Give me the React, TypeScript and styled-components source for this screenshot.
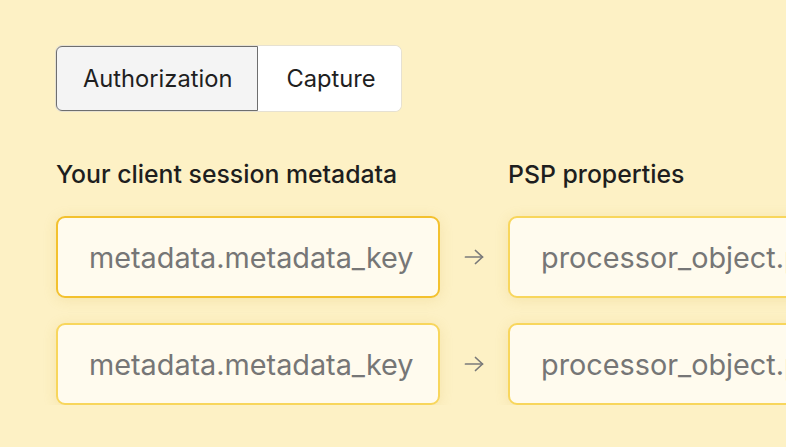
import styled, { createGlobalStyle } from 'styled-components';
import { useState } from 'react';

const GlobalStyle = createGlobalStyle`
    html, body {
        margin: 0;
        padding: 0;
        background: #fdf1c5;
        overflow: hidden;
    }
    body {
        font-family: Inter, "Noto Sans", sans-serif;
        -webkit-font-smoothing: antialiased;
    }
`;

const rows = [
    { source: 'metadata.metadata_key', target: 'processor_object.property', focused: true },
    { source: 'metadata.metadata_key', target: 'processor_object.property', focused: false },
];

const App: React.FC = () => {
    const [tab, setTab] = useState<string>('Authorization');

    return (
        <>
            <GlobalStyle />
            <StyledPage>
                <StyledTabs>
                    {['Authorization', 'Capture'].map((item) => (
                        <StyledTab key={item} $active={tab === item} onClick={() => setTab(item)}>
                            {item}
                        </StyledTab>
                    ))}
                </StyledTabs>
                <StyledGrid>
                    <StyledLabel>Your client session metadata</StyledLabel>
                    <span />
                    <StyledLabel>PSP properties</StyledLabel>
                    {rows.map((row, index) => (
                        <StyledRowFragment key={index}>
                            <StyledField $focused={row.focused}>{row.source}</StyledField>
                            <StyledArrow>
                                <svg width="20" height="16" viewBox="0 0 20 16" fill="none" stroke="currentColor" strokeWidth="1.7" strokeLinecap="round" strokeLinejoin="round">
                                    <path d="M1.5 8h17" />
                                    <path d="M11.5 1.5L18.5 8l-7 6.5" />
                                </svg>
                            </StyledArrow>
                            <StyledField $focused={false}>{row.target}</StyledField>
                        </StyledRowFragment>
                    ))}
                </StyledGrid>
            </StyledPage>
        </>
    );
};

const StyledPage = styled.div`
    padding: 46px 0 0 56px;
    width: 900px;
`;

const StyledTabs = styled.div`
    display: inline-flex;
    background: #ffffff;
    border-radius: 6px;
    box-shadow: 0 0 0 1px #e6e1d2;
`;

const StyledTab = styled.div<{ $active: boolean }>`
    height: 65px;
    box-sizing: border-box;
    display: flex;
    align-items: center;
    padding: 0 ${(p) => (p.$active ? '25px' : '25px')} 0 ${(p) => (p.$active ? '26px' : '28px')};
    font-size: 23.7px;
    color: #1f1f1f;
    cursor: pointer;
    border-radius: ${(p) => (p.$active ? '6px 0 0 6px' : '0 6px 6px 0')};
    background: ${(p) => (p.$active ? '#f4f4f4' : '#ffffff')};
    border: ${(p) => (p.$active ? '1.5px solid #6e6e6e' : 'none')};
`;

const StyledGrid = styled.div`
    margin-top: 49px;
    display: grid;
    grid-template-columns: 384px 68px 384px;
    row-gap: 25px;
`;

const StyledRowFragment = styled.div`
    display: contents;
`;

const StyledLabel = styled.div`
    font-size: 24.8px;
    font-weight: 500;
    color: #1e1e1e;
    line-height: 28px;
    margin-bottom: 3px;
`;

const StyledField = styled.div<{ $focused: boolean }>`
    height: 82px;
    box-sizing: border-box;
    display: flex;
    align-items: center;
    padding-left: 31px;
    border-radius: 9px;
    background: #fffbee;
    border: 2px solid ${(p) => (p.$focused ? '#f3c12e' : '#f8d65c')};
    box-shadow: 0 2px 14px rgba(200, 160, 40, 0.16);
    font-size: 28.8px;
    color: #767676;
    white-space: nowrap;
    overflow: hidden;
`;

const StyledArrow = styled.div`
    display: flex;
    align-items: center;
    justify-content: center;
    color: #7a7a7a;
`;

export default App;
